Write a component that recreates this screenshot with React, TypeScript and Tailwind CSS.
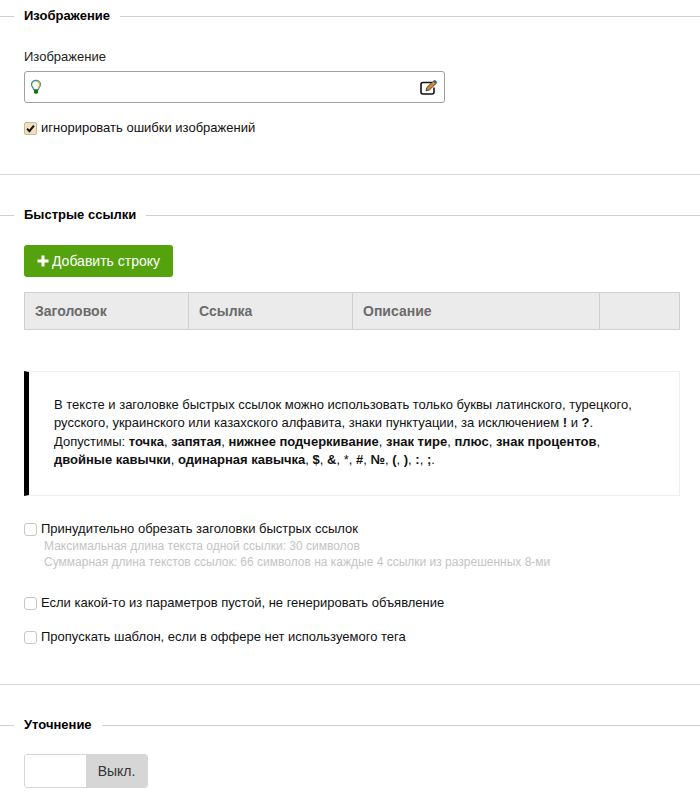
function Legend({ title }: { title: string }) {
  return (
    <div className="flex items-center h-[17px]">
      <div className="w-[14px] h-px mt-[1px] bg-[#d0d0d0]" />
      <div className="pl-[10px] pr-[10px] text-[13px] font-bold text-black leading-[17px]">{title}</div>
      <div className="flex-1 h-px mt-[1px] bg-[#d0d0d0]" />
    </div>
  );
}

function Check({ label, checked }: { label: string; checked?: boolean }) {
  return (
    <div className="flex items-center h-[18px] pl-[24px] text-[13px] leading-[18px] text-[#111]">
      {checked ? (
        <span className="w-[13px] h-[13px] rounded-[2px] bg-[#f0dfc0] border border-[#c9b78f] flex items-center justify-center mr-[4px]">
          <svg width="9" height="9" viewBox="0 0 10 10">
            <path d="M1.2 5.2 L3.8 8 L8.8 1.8" fill="none" stroke="#111" strokeWidth="2.2" />
          </svg>
        </span>
      ) : (
        <span className="w-[13px] h-[13px] rounded-[3px] bg-white border border-[#c8c8c8] mr-[4px]" />
      )}
      <span>{label}</span>
    </div>
  );
}

export default function App() {
  return (
    <div className="w-[700px] h-[800px] overflow-hidden bg-white text-black font-['Liberation_Sans',Arial,sans-serif]">
      <div className="pt-[7px]">
        <Legend title="Изображение" />
      </div>
      <div className="pl-[24px] pt-[24px] text-[13px] leading-[18px] text-[#222]">Изображение</div>
      <div className="ml-[24px] mt-[5px] w-[421px] h-[32px] border border-[#a0a0a0] rounded-[3px] flex items-center justify-between pl-[5px] pr-[5px]">
        <svg width="12" height="16" viewBox="0 0 12 16">
          <path d="M6 1.5 C3.2 1.5 1.5 3.4 1.5 5.6 C1.5 7.6 3.2 8.6 3.8 10.6 L8.2 10.6 C8.8 8.6 10.5 7.6 10.5 5.6 C10.5 3.4 8.8 1.5 6 1.5 Z" fill="#fffdf0" stroke="#3f8f9a" strokeWidth="1.3" />
          <path d="M7.4 2.2 C9.2 3 10 4.4 9.8 6.2 C9.6 7.4 8.8 8.2 8.2 9.4" fill="none" stroke="#d9a93a" strokeWidth="1.1" />
          <path d="M4 11 H8 V13.5 L7 14.8 H5 L4 13.5 Z" fill="#0f7a12" />
        </svg>
        <svg width="20" height="18" viewBox="0 0 20 18">
          <path d="M13 4.5 H4 Q2 4.5 2 6.5 V14 Q2 16 4 16 H13 Q15 16 15 14 V9.5" fill="none" stroke="#111" strokeWidth="1.6" />
          <path d="M7 12.8 L7.8 9.6 L14.5 3 L17 5.5 L10.3 12 Z" fill="#d9862e" stroke="#222" strokeWidth="0.8" />
          <path d="M14.5 3 L15.8 1.7 L18.3 4.2 L17 5.5 Z" fill="#1f5fa8" />
        </svg>
      </div>
      <div className="pt-[16px]">
        <Check label="игнорировать ошибки изображений" checked />
      </div>

      <div className="mt-[37px] h-px bg-[#d8d8d8]" />

      <div className="pt-[31px]">
        <Legend title="Быстрые ссылки" />
      </div>
      <div className="ml-[24px] mt-[22px] w-[149px] h-[32px] rounded-[3px] bg-[#54a30e] text-white text-[14px] flex items-center justify-center gap-[3px]">
        <svg width="12" height="12" viewBox="0 0 12 12">
          <path d="M4.5 0.5 H7.5 V4.5 H11.5 V7.5 H7.5 V11.5 H4.5 V7.5 H0.5 V4.5 H4.5 Z" fill="#fff" />
        </svg>
        <span>Добавить строку</span>
      </div>
      <div className="ml-[24px] mt-[15px] w-[656px] h-[38px] flex bg-[#ebebeb] border border-[#d0d0d0] text-[14px] font-bold text-[#6b6b6b]">
        <div className="w-[164px] border-r border-[#d0d0d0] flex items-center pl-[10px]">Заголовок</div>
        <div className="w-[164px] border-r border-[#d0d0d0] flex items-center pl-[10px]">Ссылка</div>
        <div className="w-[247px] border-r border-[#d0d0d0] flex items-center pl-[10px]">Описание</div>
        <div className="flex-1" />
      </div>

      <div className="ml-[24px] mt-[41px] w-[656px] h-[125px] border-y border-r border-[#efefef] border-l-[5px] border-l-black pl-[25px] pr-[20px] pt-[24px] text-[13px] leading-[18.4px] text-[#111]">
        В тексте и заголовке быстрых ссылок можно использовать только буквы латинского, турецкого, русского, украинского или казахского алфавита, знаки пунктуации, за исключением <b>!</b> и <b>?</b>. Допустимы: <b>точка</b>, <b>запятая</b>, <b>нижнее подчеркивание</b>, <b>знак тире</b>, <b>плюс</b>, <b>знак процентов</b>, <b>двойные кавычки</b>, <b>одинарная кавычка</b>, <b>$</b>, <b>&amp;</b>, *, <b>#</b>, <b>№</b>, <b>(</b>, <b>)</b>, <b>:</b>, <b>;</b>.
      </div>

      <div className="pt-[24px]">
        <Check label="Принудительно обрезать заголовки быстрых ссылок" />
      </div>
      <div className="pl-[44px] text-[12px] leading-[16px] text-[#c4c4c4]">
        <div>Максимальная длина текста одной ссылки: 30 символов</div>
        <div>Суммарная длина текстов ссылок: 66 символов на каждые 4 ссылки из разрешенных 8-ми</div>
      </div>
      <div className="pt-[24px]">
        <Check label="Если какой-то из параметров пустой, не генерировать объявление" />
      </div>
      <div className="pt-[16px]">
        <Check label="Пропускать шаблон, если в оффере нет используемого тега" />
      </div>

      <div className="mt-[38px] h-px bg-[#d8d8d8]" />

      <div className="pt-[31px]">
        <Legend title="Уточнение" />
      </div>
      <div className="ml-[24px] mt-[21px] w-[124px] h-[34px] rounded-[3px] border border-[#d6d6d6] flex overflow-hidden">
        <div className="w-[61px] bg-white" />
        <div className="flex-1 bg-[#d6d6d6] text-[#333] text-[14px] flex items-center justify-center">Выкл.</div>
      </div>
    </div>
  );
}
